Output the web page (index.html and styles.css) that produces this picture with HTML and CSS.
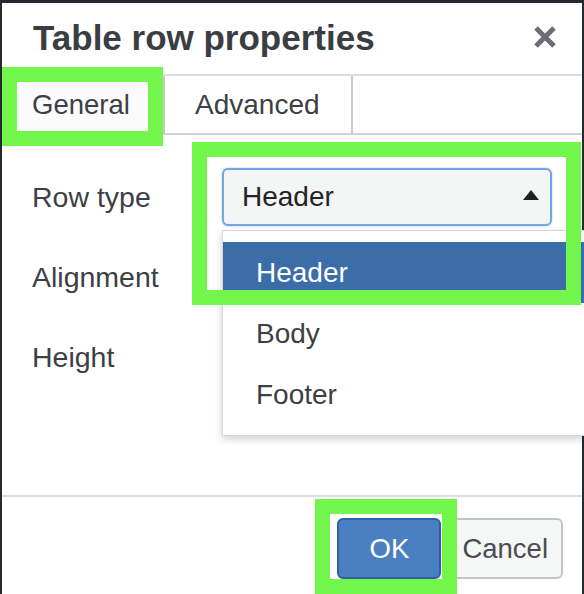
FILE: index.html
```html
<!DOCTYPE html>
<html>
<head>
<meta charset="utf-8">
<link rel="stylesheet" href="styles.css">
</head>
<body>
<div class="dialog">
  <div class="header">
    <div class="title">Table row properties</div>
    <svg class="close" width="24" height="22" viewBox="0 0 24 22"><path d="M3 2 L21 20 M21 2 L3 20" stroke="#6c6e73" stroke-width="5" stroke-linecap="butt"/></svg>
  </div>
  <div class="tabs">
    <div class="tab tab-general">General</div>
    <div class="tab tab-advanced">Advanced</div>
  </div>
  <div class="form">
    <div class="label">Row type</div>
    <div class="select"><span>Header</span><span class="caret"></span></div>
    <div class="label">Alignment</div>
    <div></div>
    <div class="label">Height</div>
    <div></div>
  </div>
  <div class="footer">
    <button class="btn btn-ok">OK</button>
    <button class="btn btn-cancel">Cancel</button>
  </div>
  <div class="menu">
    <div class="item selected">Header</div>
    <div class="item">Body</div>
    <div class="item">Footer</div>
  </div>
</div>
<div class="mark mark-tab"></div>
<div class="mark mark-select"></div>
<div class="mark mark-ok"></div>
</body>
</html>
```
FILE: styles.css
```css
html, body {
  margin: 0;
  padding: 0;
}
body {
  width: 584px;
  height: 594px;
  overflow: hidden;
  background: #262a30;
  position: relative;
  font-family: "Liberation Sans", Arial, sans-serif;
  color: #3c4045;
}
.dialog {
  position: relative;
  width: 580px;
  height: 591px;
  margin: 3px 0 0 2px;
  background: #fff;
  display: flex;
  flex-direction: column;
}
.header {
  height: 71px;
  flex: none;
  display: flex;
  align-items: center;
  justify-content: space-between;
  padding: 0 25px 0 31px;
  border-bottom: 2px solid #dedede;
}
.title {
  font-size: 35px;
  font-weight: bold;
  color: #3a3e43;
  margin-top: -1px;
}
.close {
  display: block;
  margin-top: -3px;
}
.tabs {
  height: 57px;
  flex: none;
  display: flex;
  border-bottom: 2px solid #d2d2d2;
}
.tab {
  display: flex;
  align-items: center;
  font-size: 27.5px;
  color: #3c4045;
  border-right: 2px solid #c9c9c9;
  padding-left: 30px;
  box-sizing: border-box;
}
.tab-general {
  width: 163px;
  background: #fbfbfb;
}
.tab-advanced {
  width: 188px;
  font-size: 28px;
}
.form {
  display: grid;
  grid-template-columns: 190px 330px;
  grid-auto-rows: 80px;
  align-items: center;
  padding: 22px 0 0 30px;
}
.label {
  font-size: 28.5px;
  color: #3c4045;
}
.select {
  height: 58px;
  box-sizing: border-box;
  border: 2px solid #78a5e2;
  border-radius: 6px;
  background: #f4f5f5;
  box-shadow: 0 0 2px rgba(90, 140, 220, 0.55);
  display: flex;
  align-items: center;
  justify-content: space-between;
  padding: 0 11px 0 18px;
  font-size: 28px;
  color: #222426;
}
.caret {
  width: 0;
  height: 0;
  border-left: 8px solid transparent;
  border-right: 8px solid transparent;
  border-bottom: 10px solid #1f2123;
  margin-top: -4px;
}
.footer {
  margin-top: auto;
  height: 76px;
  flex: none;
  border-top: 2px solid #dedede;
  display: flex;
  justify-content: flex-end;
  align-items: flex-start;
  gap: 6px;
  padding: 21px 19px 0 0;
  box-sizing: content-box;
}
.btn {
  height: 61px;
  box-sizing: border-box;
  font-family: "Liberation Sans", Arial, sans-serif;
  font-size: 27.5px;
  border-radius: 6px;
  margin: 0;
}
.btn-ok {
  width: 104px;
  background: #4a7fc1;
  border: 2px solid #2f609f;
  color: #fff;
}
.btn-cancel {
  background: #f5f6f6;
  border: 2px solid #c3c4c6;
  color: #4a4c4f;
  padding: 0 13px;
}
.menu {
  position: absolute;
  left: 220px;
  top: 227px;
  width: 380px;
  box-sizing: border-box;
  background: #fff;
  border: 1px solid #d8d8d8;
  box-shadow: 0 3px 8px rgba(0, 0, 0, 0.18);
  padding: 11px 0 10px;
}
.item {
  height: 61px;
  display: flex;
  align-items: center;
  padding-left: 33px;
  font-size: 28px;
  color: #3c4045;
}
.item.selected {
  background: #3b6ea9;
  color: #fff;
}
.mark {
  position: absolute;
  box-sizing: border-box;
  border: 15px solid #72f64b;
}
.mark-tab {
  left: 2px;
  top: 67px;
  width: 161px;
  height: 79px;
}
.mark-select {
  left: 192px;
  top: 142px;
  width: 389px;
  height: 163px;
}
.mark-ok {
  left: 315px;
  top: 499px;
  width: 142px;
  height: 95px;
}
```
